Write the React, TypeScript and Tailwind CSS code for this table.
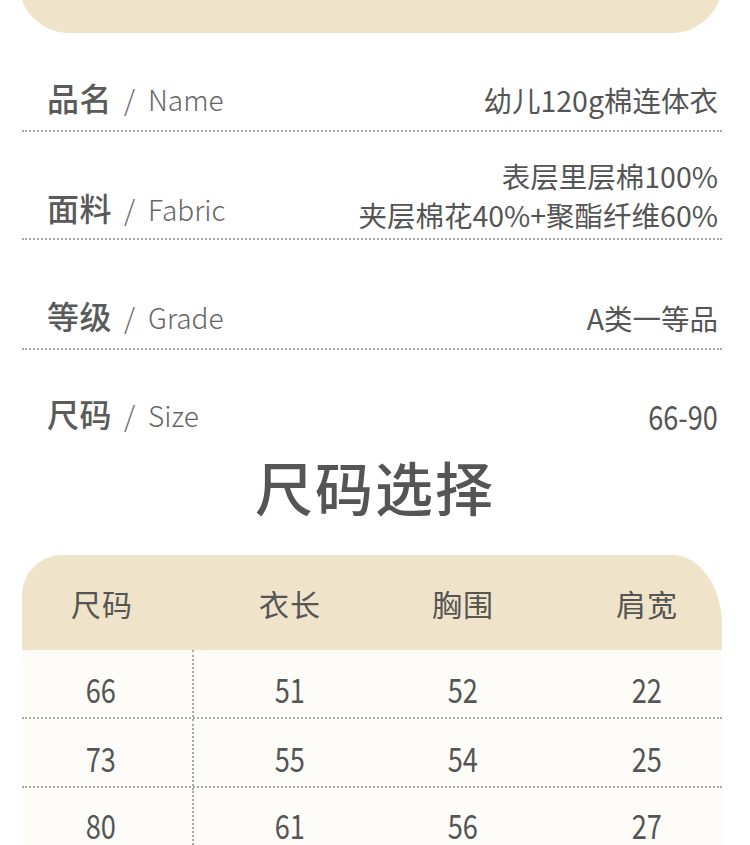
import React from 'react';

const cjk = "font-['Noto_Sans_CJK_SC','Noto_Sans',sans-serif]";

interface InfoRowProps {
  cn: string;
  en: string;
  values: string[];
  height: string;
  labelPad: string;
  valuePad: string;
  last?: boolean;
  condensed?: boolean;
}

const InfoRow: React.FC<InfoRowProps> = ({ cn, en, values, height, labelPad, valuePad, last, condensed }) => {
  return (
    <div
      className={`flex items-end justify-between ${height} ${
        last ? '' : 'border-b-2 border-dotted border-[#a8a8a8]'
      }`}
    >
      <div className={`flex items-baseline pl-[25px] text-[#555] ${labelPad}`}>
        <span className="text-[32px] font-medium leading-[40px] tracking-[0.5px] text-[#5a5a5a]">{cn}</span>
        <span className="ml-[12px] text-[28px] font-light leading-[40px] text-[#666]">/</span>
        <span className="ml-[13px] text-[28px] font-light leading-[40px] text-[#666]">{en}</span>
      </div>
      <div className={`flex flex-col items-end pr-[4px] text-[#555] ${valuePad}`}>
        {values.map((v) => (
          <span
            key={v}
            className={
              condensed
                ? 'inline-block origin-right scale-x-[0.82] text-[33px] leading-[39px]'
                : 'text-[28.5px] leading-[39px]'
            }
          >
            {v}
          </span>
        ))}
      </div>
    </div>
  );
};

const sizes = [
  ['66', '51', '52', '22'],
  ['73', '55', '54', '25'],
  ['80', '61', '56', '27'],
];

const headers = ['尺码', '衣长', '胸围', '肩宽'];
const colPad = ['pr-[12px]', '', '', 'pl-[32px]'];

export default function App() {
  return (
    <div className={`w-[750px] h-[845px] overflow-hidden bg-white ${cjk}`}>
      {/* top banner, mostly cut off */}
      <div className="ml-[19px] mr-[28px] -mt-[47px] flex h-[80px] justify-center rounded-b-[50px] bg-[#efe4c9]">
        <span className="-mt-[13px] text-[58px] font-medium leading-[58px] tracking-[2px] text-[#555]">产品信息</span>
      </div>

      <div className="ml-[22px] mr-[28px]">
        <InfoRow
          cn="品名"
          en="Name"
          values={['幼儿120g棉连体衣']}
          height="h-[99px]"
          labelPad="pb-[11px]"
          valuePad="pb-[11px]"
        />
        <InfoRow
          cn="面料"
          en="Fabric"
          values={['表层里层棉100%', '夹层棉花40%+聚酯纤维60%']}
          height="h-[108px]"
          labelPad="pb-[9px]"
          valuePad="pb-[4px]"
        />
        <InfoRow
          cn="等级"
          en="Grade"
          values={['A类一等品']}
          height="h-[110px]"
          labelPad="pb-[11px]"
          valuePad="pb-[11px]"
        />
        <InfoRow
          cn="尺码"
          en="Size"
          values={['66-90']}
          height="h-[96px]"
          labelPad="pb-[11px]"
          valuePad="pb-[10px]"
          last
          condensed
        />
      </div>

      <div className="mt-[5px] text-center text-[58px] font-medium leading-[70px] tracking-[2px] text-[#555]">
        尺码选择
      </div>

      <div className="ml-[22px] mr-[28px] mt-[34px]">
        <div className="grid h-[95px] grid-cols-[172px_192px_154px_182px] items-center rounded-tl-[40px] rounded-tr-[50px_70px] bg-[#efe4c9] text-[#555]">
          {headers.map((h, i) => (
            <div key={h} className={`text-center text-[30px] leading-[40px] tracking-[1px] ${colPad[i]}`}>
              {h}
            </div>
          ))}
        </div>
        <div className="bg-[#fdfcf8]">
          {sizes.map((row, r) => (
            <div
              key={r}
              className={`grid h-[69px] grid-cols-[172px_192px_154px_182px] ${
                r < sizes.length - 1 ? 'border-b-2 border-dotted border-[#a8a8a8]' : ''
              }`}
            >
              {row.map((cell, c) => (
                <div
                  key={c}
                  className={`flex items-center justify-center text-[#555] ${
                    r === sizes.length - 1 ? 'pt-[4px]' : 'pt-[10px]'
                  } ${colPad[c]} ${c === 0 ? 'border-r-2 border-dotted border-[#a8a8a8]' : ''}`}
                >
                  <span className="inline-block scale-x-[0.8] text-[34px] leading-[40px]">{cell}</span>
                </div>
              ))}
            </div>
          ))}
        </div>
      </div>
    </div>
  );
}
